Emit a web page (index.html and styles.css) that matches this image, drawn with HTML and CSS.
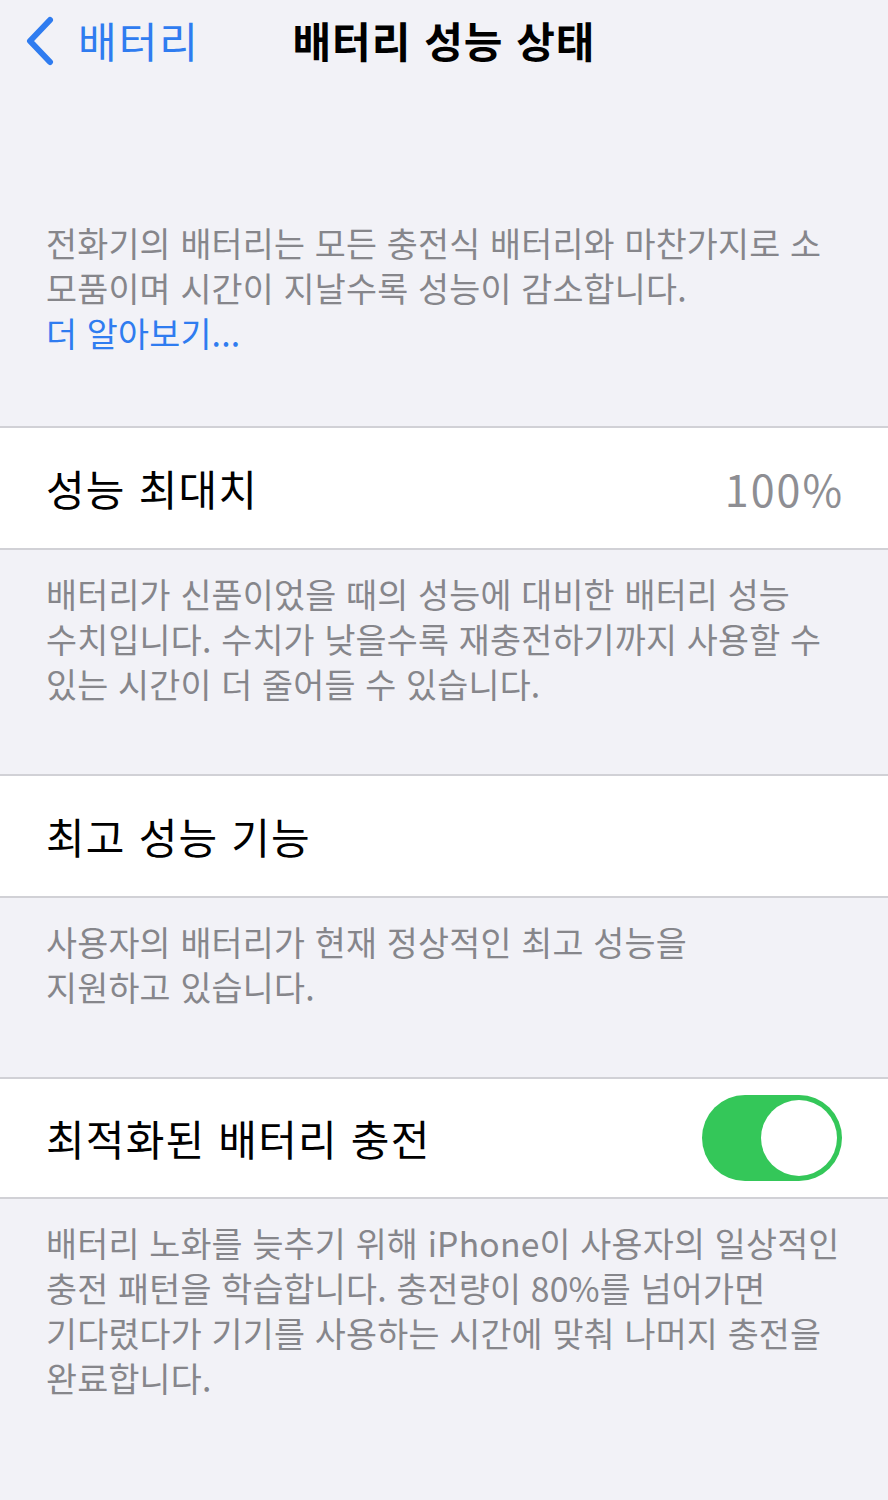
FILE: index.html
```html
<!DOCTYPE html>
<html lang="ko">
<head>
<meta charset="utf-8">
<title>배터리 성능 상태</title>
<link rel="stylesheet" href="styles.css">
</head>
<body>
<div class="page">
  <header class="nav">
    <div class="back">
      <svg class="chev" width="34" height="50" viewBox="0 0 34 50"><path d="M28 4 L8 25 L28 46" fill="none" stroke="#2f7cf0" stroke-width="6" stroke-linecap="round" stroke-linejoin="round"/></svg>
      <span class="back-label">배터리</span>
    </div>
    <h1 class="title">배터리 성능 상태</h1>
    <div></div>
  </header>

  <p class="note intro">전화기의 배터리는 모든 충전식 배터리와 마찬가지로 소<br>모품이며 시간이 지날수록 성능이 감소합니다.<br><span class="link">더 알아보기...</span></p>

  <section class="group">
    <div class="row">
      <span class="label">성능 최대치</span>
      <span class="value">100%</span>
    </div>
    <p class="note">배터리가 신품이었을 때의 성능에 대비한 배터리 성능<br>수치입니다. 수치가 낮을수록 재충전하기까지 사용할 수<br>있는 시간이 더 줄어들 수 있습니다.</p>
  </section>

  <section class="group">
    <div class="row">
      <span class="label">최고 성능 기능</span>
    </div>
    <p class="note">사용자의 배터리가 현재 정상적인 최고 성능을<br>지원하고 있습니다.</p>
  </section>

  <section class="group">
    <div class="row row-short">
      <span class="label">최적화된 배터리 충전</span>
      <span class="toggle"><span class="knob"></span></span>
    </div>
    <p class="note">배터리 노화를 늦추기 위해 iPhone이 사용자의 일상적인<br>충전 패턴을 학습합니다. 충전량이 80%를 넘어가면<br>기다렸다가 기기를 사용하는 시간에 맞춰 나머지 충전을<br>완료합니다.</p>
  </section>
</div>
</body>
</html>
```

FILE: styles.css
```css
html, body {
  margin: 0;
  padding: 0;
  background: #f2f2f7;
}
body {
  font-family: "Noto Sans CJK KR", "Noto Sans", sans-serif;
  color: #000;
}
.page {
  width: 888px;
  min-height: 1500px;
  background: #f2f2f7;
}
.nav {
  height: 80px;
  display: grid;
  grid-template-columns: 1fr auto 1fr;
  align-items: center;
}
.back {
  display: flex;
  align-items: center;
  padding-left: 22px;
  gap: 22px;
  color: #2f7cf0;
}
.chev {
  display: block;
  margin-top: 2px;
}
.back-label {
  font-size: 42px;
  line-height: 1;
  letter-spacing: 2px;
}
.title {
  margin: 0;
  font-size: 42px;
  font-weight: 700;
  line-height: 1;
  letter-spacing: 1px;
}
.note {
  margin: 0;
  padding: 0 46px;
  font-size: 33.7px;
  line-height: 45px;
  color: #86868b;
  letter-spacing: 0.2px;
}
.intro {
  margin-top: 140px;
  margin-bottom: 71px;
}
.link {
  color: #2f7cf0;
}
.group {
  margin-bottom: 68px;
}
.group .note {
  padding-top: 21px;
}
.row {
  background: #fff;
  border-top: 2px solid #d1d1d6;
  border-bottom: 2px solid #d1d1d6;
  box-sizing: border-box;
  height: 124px;
  display: flex;
  align-items: center;
  justify-content: space-between;
  padding: 0 46px;
}
.row-short {
  height: 122px;
}
.label {
  font-size: 42px;
  line-height: 1;
  letter-spacing: 1.2px;
}
.value {
  font-size: 43px;
  line-height: 1;
  color: #8e8e93;
  letter-spacing: 2px;
  margin-right: -2px;
}
.toggle {
  width: 140px;
  height: 86px;
  border-radius: 43px;
  background: #34c759;
  display: flex;
  align-items: center;
  justify-content: flex-end;
  padding: 0 5px;
  box-sizing: border-box;
}
.knob {
  width: 76px;
  height: 76px;
  border-radius: 50%;
  background: #fff;
}
```
